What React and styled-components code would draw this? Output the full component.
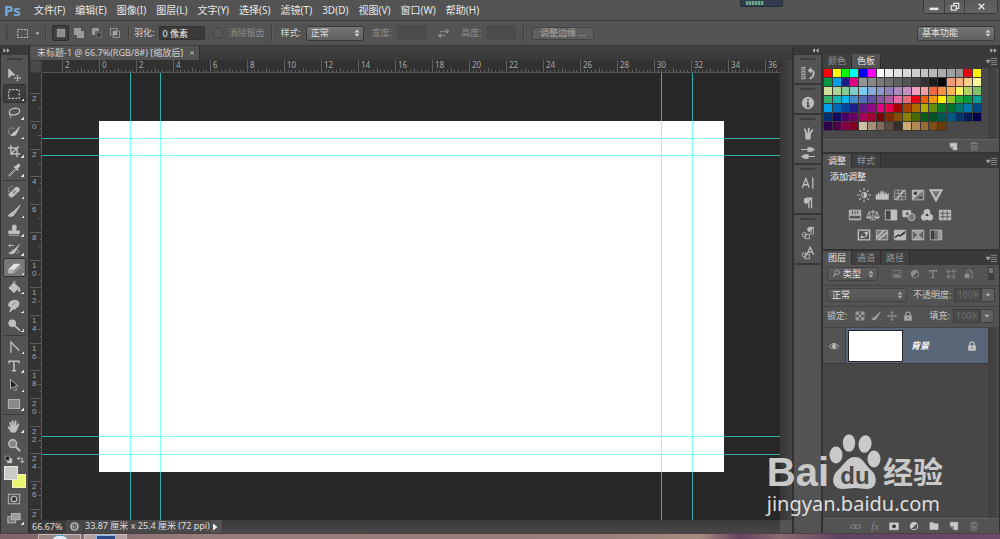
import { useState } from "react";
import styled, { createGlobalStyle } from "styled-components";

const MENUS = ["文件(F)", "编辑(E)", "图像(I)", "图层(L)", "文字(Y)", "选择(S)", "滤镜(T)", "3D(D)", "视图(V)", "窗口(W)", "帮助(H)"];

const SWATCHES = (
    "ff0000 ffff00 00ff00 00ffff 0000ff ff00ff ffffff ebebeb e1e1e1 d7d7d7 cccccc c2c2c2 b7b7b7 acacac a0a0a0 959595 e60012 fff100 " +
    "009944 00a0e9 1d2088 e4007f 959595 888888 7b7b7b 6e6e6e 616161 545454 444444 333333 1c1c1c 000000 f29b76 f6b37f facd89 fff799 " +
    "cce198 acd598 89c997 84ccc9 7ecef4 88abda 8c97cb 8f82bc aa89bd c490bf f19ec2 f29c9f ec6941 f19149 f8b551 fff45c b3d465 80c269 " +
    "32b16c 13b5b1 00b7ee 448aca 556fb5 5f52a0 8957a1 ae5da1 ea68a2 eb6877 e60012 eb6100 f39800 fff100 8fc31f 22ac38 009944 009e96 " +
    "00a0e9 0068b7 00479d 1d2088 601986 920783 e4007f e5004f a40000 a84200 ac6a00 b7aa00 638c0b 097c25 007130 00736d 0075a9 004986 " +
    "002e73 100964 4a0063 6a005f a4005b a40035 7d0000 7f2d00 834e00 8a8000 486a00 005e15 005520 005752 005982 003567 001c58 03004c " +
    "31004a 500047 7e0043 7d0022 cfbfa2 a59079 806b5b 5c4a40 362e2b cfa972 b28850 996c33 7a5018 6a3906"
).split(" ");

const GUIDES_X = [88, 118, 619, 650];
const GUIDES_Y = [65, 82, 363, 381];

// drawings on a 16 x 16 grid
const ICONS = {
    move: <><path d="M2 1v10l3-3h4z" fill="currentColor" /><path d="M12 8v7M8.500 11.500h7M11 9l1-1 1 1M11 14l1 1 1-1M9.500 10.500l-1 1 1 1M14.500 10.500l1 1-1 1" /></>,
    marquee: <rect x="2" y="3" width="12" height="10" strokeDasharray="2.500 1.500" strokeWidth="1.300" />,
    lasso: <><ellipse cx="8.500" cy="6.500" rx="6" ry="3.700" strokeWidth="1.500" transform="rotate(-10 8 6)" /><path d="M4 9c-2 1-1 3 .5 2.500S5 9 3 9.500M4 12v2" /></>,
    quick: <><path d="M8 4c-4-2-7 1-6 5 .6 2 3 4 6 3" strokeDasharray="1.500 1.200" /><path d="M14.500 2L9 8l2 1.500z" fill="currentColor" /><path d="M9.500 8c-3 0-3 3-5 3.500 3 1.500 6.500.5 6-2.500z" fill="currentColor" /></>,
    crop: <path d="M4.500 1v10.500H15M1 4.500h10.500V15M4.500 11.500L13.500 2.500" strokeWidth="1.600" />,
    dropper: <><path d="M9 7l-6 6-1 2 2-1 6-6" /><path d="M8 4.500l4 4 1-1-1-1 2.500-3c.8-1.500-1-2.800-2-2L9.500 4l-.8-.5z" fill="currentColor" /></>,
    heal: <><rect x="1" y="5.500" width="14" height="5.500" rx="2.700" fill="currentColor" transform="rotate(-42 8 8)" /><path d="M6 7l3 3M7.500 5.500l3 3" stroke="#535353" /><path d="M7 2C3 1 .5 4 2 8" strokeDasharray="1.500 1.200" /></>,
    brush: <><path d="M15 1.500L7 9l2 2z" fill="currentColor" /><path d="M7 9.500c-3-.5-3 2.800-6 4 3 1.200 7.500.5 7.500-2.500z" fill="currentColor" /></>,
    stamp: <path d="M6.500 9L6 5a2.300 2.300 0 1 1 4.500 0L10 9h4v3H2V9zM2 14h12" fill="currentColor" />,
    history: <><path d="M14 3L8 9l1.500 1.500z" fill="currentColor" /><path d="M8 9c-3 0-3 3-6 4 3 1 7.500.5 7.500-2.500z" fill="currentColor" /><path d="M2 4h6M2 4l2-2M2 4l2 2M11 9c3 0 3 4 0 4" /></>,
    eraser: <><path d="M1 10L8 3h7.500L8.500 10z" fill="#e2e2e2" stroke="none" /><path d="M1 10.500h7.500V14H1z" fill="#b4b4b4" stroke="none" /><path d="M9 10.200L15.500 3.700V7L9 13.500z" fill="#9a9a9a" stroke="none" /></>,
    bucket: <><path d="M2 9l6-5.500 5.500 5L8 14.500z" fill="currentColor" /><path d="M7 8V3.500c0-3 3-2.500 3 0" /><path d="M13 8c2 2 2.500 4 1 5.500-1.500-1-1.500-3-1-5.500z" fill="currentColor" /></>,
    smudge: <><path d="M3 14.500l2-4.500-3-2c-1-4 3-6.500 7-6.500 5 0 5.500 4 4 6.500l-3 3-2 1-1-1-3 3.500z" fill="currentColor" /><path d="M6 7l4-3" stroke="#888" /></>,
    dodge: <><circle cx="6" cy="6" r="4" fill="currentColor" /><path d="M9 9l6 5.500" strokeWidth="2" /></>,
    pen: <path d="M4.500 14.500V2.500l9.500 9.500" strokeWidth="1.500" />,
    type: <path d="M2.500 5V2.500h11V5M8 2.500v11M5.500 13.500h5" strokeWidth="1.800" />,
    select: <path d="M4 1.500v11l3-2.500 2 4.500 2-1-2-4.200h3.500z" fill="#222" />,
    shape: <rect x="1.500" y="3" width="13" height="10" fill="#8a8a8a" />,
    hand: <path d="M4.500 15c-1-3-3-4-3.500-6l1-.5 2.500 2L3 4l1.300-.5L6 8 5.700 2l1.400-.2L8 8l1.300-6 1.300.3L10 8.500 12.800 5l1 .8-2 5.200-1.800 4z" fill="currentColor" strokeWidth=".6" />,
    zoom: <><circle cx="6.500" cy="6.500" r="4.500" fill="#858585" strokeWidth="1.600" /><path d="M10 10l5 5" strokeWidth="2.400" /></>,
    mask: <><rect x="1.500" y="2.500" width="13" height="11" /><circle cx="8" cy="8" r="3.200" fill="#3a3a3a" strokeWidth="1.300" /></>,
    screen: <><rect x="1" y="6.500" width="9" height="7" fill="#777" /><rect x="5" y="3" width="10" height="7" fill="#999" /></>,
    square: <rect x="3" y="3" width="10" height="10" fill="#8c8c8c" />,
    unite: <><rect x="2" y="2" width="8" height="8" fill="#999" /><rect x="6" y="6" width="8" height="8" fill="#999" /></>,
    subtract: <><path d="M2 10V2h8v3H5v5z" fill="#999" /><rect x="7" y="7" width="7" height="7" fill="#444" stroke="#777" /></>,
    intersect: <><rect x="2" y="2" width="8.500" height="8.500" /><rect x="5.500" y="5.500" width="8.500" height="8.500" /><path d="M6 6h4v4H6z" fill="currentColor" /></>,
    swap: <path d="M3 5h9M1 11h10M12 2v6l4-3zM4 8v6l-4-3z" fill="currentColor" strokeWidth="1.300" />,
    grip: <path d="M8 0v16" strokeWidth="3" strokeDasharray="1 1.500" stroke="#3a3a3a" />,
    down: <path d="M3 5.500h10L8 11z" fill="currentColor" stroke="none" />,
    updown: <path d="M3 7l5-6 5 6zM3 9.500l5 6 5-6z" fill="currentColor" stroke="none" />,
    minus: <path d="M1 9h14v4H1z" fill="currentColor" stroke="none" />,
    restore: <><path d="M6 6V2h8v8h-4" strokeWidth="2" /><rect x="2" y="6" width="8" height="7" strokeWidth="2" /></>,
    close: <path d="M3 3l10 10M13 3L3 13" strokeWidth="2.500" />,
    closeThin: <path d="M3 3l10 10M13 3L3 13" strokeWidth="2" />,
    left2: <path d="M7 3v10L1 8zM15 3v10L9 8z" fill="currentColor" stroke="none" />,
    right2: <path d="M1 3v10l6-5zM9 3v10l6-5z" fill="currentColor" stroke="none" />,
    panelMenu: <path d="M0 6h6L3 10zM7 3.500h9M7 6.500h9M7 9.500h9M7 12.500h9" fill="currentColor" />,
    historyPanel: <><rect x="1" y="1.500" width="3.500" height="3" /><rect x="1" y="6.500" width="3.500" height="3" /><rect x="1" y="11.500" width="3.500" height="3" /><path d="M11 5c5 0 5 6-1 9.500" strokeWidth="2" /><path d="M12 1.500v7L7.500 5z" fill="currentColor" stroke="none" /></>,
    info: <><circle cx="8" cy="8" r="6.500" fill="currentColor" /><path d="M8 3.500v2M6.500 7.500H8V12M6.500 12h3.500" stroke="#444" strokeWidth="1.700" /></>,
    brushes: <><path d="M5 9h6l-.8 6H5.800z" fill="currentColor" /><path d="M6.500 9L4 3M8.500 9L9 2M10 9l3.500-5" strokeWidth="2" /></>,
    presets: <path d="M0 4h8M8 2h4l3 2-3 2H8zM16 12H8M8 10H4l-3 2 3 2h4z" fill="currentColor" strokeWidth="1.300" />,
    para: <path d="M7 8.500a3 3 0 0 1 0-6h6M9 2.500V14M12 2.500V14M7 3v5" strokeWidth="1.500" fill="currentColor" />,
    charPanel: <path d="M1.500 13.500L5.500 3l4 10.500M3 10h5M13.500 1.500v13" strokeWidth="1.500" />,
    paraStyle: <><path d="M10 6.500a2.300 2.300 0 0 1 0-5h4.500M11.500 1.500V10M14 1.500V10" fill="currentColor" /><circle cx="3.800" cy="10" r="2.500" /><rect x="4.500" y="9.500" width="5" height="5" /></>,
    charStyle: <><path d="M7 9l3.500-7.500L14.500 10M8.500 7h5" strokeWidth="1.500" /><circle cx="3.800" cy="10" r="2.500" /><rect x="4.500" y="9.500" width="5" height="5" /></>,
    sun: <><circle cx="8" cy="8" r="3" /><path d="M8 5a3 3 0 0 1 0 6z" fill="currentColor" /><path d="M8 0v3M8 13v3M0 8h3M13 8h3M2.500 2.500l2 2M11.500 11.500l2 2M13.500 2.500l-2 2M4.500 11.500l-2 2" strokeWidth="1.300" /></>,
    levels: <path d="M1 13V9l1-2 1 2 1-4 1.500 3L7 3l1 4 1.500-4L11 8l1.500-3L14 8l1.500-2v7z" fill="currentColor" strokeWidth=".5" />,
    curves: <><path d="M1.500 2.500h13v11h-13zM6 2.500v11M10 2.500v11M1.500 6h13M1.500 10h13" strokeWidth=".7" /><path d="M2 13c7-1 5-9 12-10" strokeWidth="1.500" /></>,
    exposure: <><path d="M1.500 2.500v11h13v-11z" fill="#b4b4b4" /><path d="M2 13L14 3v10z" fill="#777" stroke="none" /><path d="M3 6h4M5 4v4M9 11h4" stroke="#2c2c2c" strokeWidth="1.500" /></>,
    vibrance: <path d="M1.500 2.500h13L8 14z" fill="#777" strokeWidth="2.200" />,
    hue: <><path d="M1.500 2.500h13v11h-13z" fill="#b0b0b0" /><path d="M2 10.500h12" stroke="#555" strokeWidth="3" /><path d="M5 3v4M8 3v4M11 3v4" stroke="#444" /></>,
    balance: <><path d="M8 2v11M3 4.500h10M5 13.500h6M3.500 5L1 10.500h5zM12.500 5L10 10.500h5z" /><path d="M1 11h5M10 11h5" strokeWidth="2" /></>,
    bw: <><path d="M1.500 2.500h13v11h-13z" fill="#444" /><path d="M8 2.500h6.500v11H8z" fill="currentColor" /></>,
    filter: <><path d="M1 3h9v7H1z" fill="currentColor" /><circle cx="6" cy="6.500" r="2" fill="#444" /><circle cx="11" cy="10.500" r="4" fill="#777" /></>,
    mixer: <><circle cx="8" cy="5" r="3.500" fill="currentColor" /><circle cx="5" cy="10.500" r="3.500" fill="currentColor" /><circle cx="11" cy="10.500" r="3.500" fill="currentColor" /><path d="M8 6l2 3H6z" fill="#333" stroke="none" /></>,
    lut: <><path d="M1.500 2.500h13v11h-13z" fill="#bbb" /><path d="M5.500 3v10M10.500 3v10M2 6h12M2 10h12" stroke="#555" /></>,
    invert: <><path d="M1.500 2.500h13v11h-13z" fill="#555" strokeWidth="1.500" /><path d="M3 12c2-1 2-8 10-8-1 3-1 6-5 7z" fill="currentColor" stroke="none" /><circle cx="8" cy="8" r="2" fill="#444" stroke="none" /></>,
    posterize: <><path d="M1.500 2.500h13v11h-13z" fill="#777" /><path d="M2 11l8-8M4 13L14 5" strokeWidth="2" /></>,
    threshold: <><path d="M1.500 2.500h13v11h-13z" fill="#bbb" /><path d="M2 10l4-3 2 1 6-5v3l-6 4-2-1-4 3z" fill="#333" stroke="none" /></>,
    selective: <><path d="M1.500 2.500h13v11h-13z" fill="#a4a4a4" /><path d="M1.500 2.500L8 8l-6.500 5.500zM14.500 2.500L8 8l6.500 5.500z" fill="#666" strokeWidth=".6" /></>,
    gradient: <><path d="M1.500 2.500h13v11h-13z" fill="#999" /><path d="M2 3h4v10H2z" fill="#3c3c3c" stroke="none" /><path d="M6 3h4v10H6z" fill="#6c6c6c" stroke="none" /></>,
    search: <><circle cx="9" cy="6" r="4" strokeWidth="1.500" /><path d="M6 9l-4 5" strokeWidth="1.800" /></>,
    picture: <><path d="M1.500 2.500h13v11h-13z" /><path d="M3 12l3-5 3 3 2-2 2.500 4z" fill="currentColor" stroke="none" /><circle cx="11.500" cy="5.500" r="1" fill="currentColor" stroke="none" /></>,
    adjust: <><circle cx="8" cy="8" r="6" strokeWidth="1.500" /><path d="M12 4A5.600 5.600 0 0 0 4 12z" fill="currentColor" /></>,
    path: <path d="M4 4h8v8H4zM1.500 1.500H5V5H1.500zM11 1.500h3.500V5H11zM1.500 11H5v3.500H1.500zM11 11h3.500v3.500H11z" />,
    smart: <><path d="M5 8V1.500h5l3.500 3.500v9H8" /><path d="M1.500 8H8v6H1.500z" fill="currentColor" /><path d="M10 1.500V5h3.500" /></>,
    checker: <><path d="M1.500 1.500h13v13h-13z" /><path d="M2 2h4v4H2zM10 2h4v4h-4zM6 6h4v4H6zM2 10h4v4H2zM10 10h4v4h-4z" fill="currentColor" stroke="none" /></>,
    moveAll: <path d="M8 1v14M1 8h14M6 3l2-2 2 2M6 13l2 2 2-2M3 6L1 8l2 2M13 6l2 2-2 2" strokeWidth="1.300" />,
    lock: <><path d="M2.500 7.500h11V15h-11z" fill="currentColor" /><path d="M4.500 7V5a3.500 3.500 0 0 1 7 0v2" strokeWidth="1.800" fill="none" /><path d="M8 9.500v3" stroke="#555" strokeWidth="2" /></>,
    eye: <><path d="M.5 8.500C4 2.500 12 2.500 15.500 8.500 12 13.500 4 13.500.5 8.500z" strokeWidth="1.500" /><circle cx="8" cy="8" r="3" fill="currentColor" /></>,
    link: <><rect x="1" y="5.500" width="7.500" height="5" rx="2.500" strokeWidth="1.500" /><rect x="7.500" y="5.500" width="7.500" height="5" rx="2.500" strokeWidth="1.500" /></>,
    addMask: <><path d="M1 3h14v11H1z" fill="currentColor" /><circle cx="8" cy="8.500" r="3" fill="#333" stroke="none" /></>,
    folder: <path d="M1.500 2.500h5l1.500 2h6.500v9h-13z" fill="currentColor" />,
    page: <><path d="M2 2h12v12H8V8H2z" fill="currentColor" /><path d="M2 9l5 5V9z" fill="#999" stroke="none" /></>,
    trash: <path d="M2 4h12M6 4V2h4v2M3.500 5v9.500h9V5M6 6.500v6M8 6.500v6M10 6.500v6" strokeWidth="1.300" />,
    reset: <><rect x="6" y="6" width="8" height="8" fill="#ccc" /><rect x="2" y="2" width="8" height="8" fill="#222" /></>,
    swapSmall: <path d="M3 6h8v7M5.500 3L2.500 6l3 3M8 10.500l3 3.500 3-3.500" strokeWidth="1.700" />,
    status: <><circle cx="8" cy="8" r="7" fill="#aaa" /><path d="M5 4h6v8H5zM8 5v4h4" stroke="#444" strokeWidth="1.400" /></>,
    play: <path d="M4 1v14l9-7z" fill="currentColor" stroke="none" />,
};

function Icon({ name, size = 13 }) {
    return (
        <Glyph width={size} height={size} viewBox="0 0 16 16" fill="none" stroke="currentColor" aria-hidden="true">
            {ICONS[name]}
        </Glyph>
    );
}

const TOOLS = [
    ["move", "marquee", "lasso", "quick", "crop", "dropper"],
    ["heal", "brush", "stamp", "history", "eraser", "bucket", "smudge", "dodge"],
    ["pen", "type", "select", "shape"],
    ["hand", "zoom"],
];

const DOCK = [["historyPanel"], ["info"], ["brushes", "presets"], ["charPanel", "para"], ["paraStyle", "charStyle"]];

const ADJUSTMENTS = [
    ["sun", "levels", "curves", "exposure", "vibrance"],
    ["hue", "balance", "bw", "filter", "mixer", "lut"],
    ["invert", "posterize", "threshold", "selective", "gradient"],
];

// one labelled division is 2 cm, split in ten
function RulerTop() {
    const marks = [];
    for (let i = -1; i <= 18; i++) {
        const x = Math.round(57 + i * 37);
        marks.push(<path key={i} d={`M${x + 0.5} 0V13`} />);
        for (let k = 1; k < 10; k++) {
            marks.push(<path key={i + "-" + k} d={`M${Math.round(x + k * 3.7) + 0.5} ${k === 5 ? 8 : 10}V13`} />);
        }
        marks.push(<text key={"t" + i} x={x + 3} y="8">{Math.abs(i * 2)}</text>);
    }
    return <TopRuler>{marks}</TopRuler>;
}

function RulerLeft() {
    const marks = [];
    for (let i = -1; i <= 14; i++) {
        const y = Math.round(48 + i * 27.7);
        marks.push(<path key={i} d={`M0 ${y + 0.5}H12`} />);
        for (let k = 1; k < 4; k++) {
            marks.push(<path key={i + "-" + k} d={`M${k === 2 ? 8 : 10} ${Math.round(y + k * 6.9) + 0.5}H12`} />);
        }
        String(Math.abs(i * 2)).split("").forEach((digit, n) => {
            marks.push(<text key={"t" + i + n} x="2" y={y + 8 + n * 8}>{digit}</text>);
        });
    }
    return <SideRuler>{marks}</SideRuler>;
}

function Select({ label, width, children, icon, small }) {
    return (
        <SelectBox $width={width} $small={small}>
            {icon && <Icon name={icon} size={9} />}
            <NativeSelect aria-label={label}>{children}</NativeSelect>
            <Icon name="updown" size={8} />
        </SelectBox>
    );
}

function PanelTabs({ tabs, active }) {
    return (
        <TabStrip>
            {tabs.map((tab) => <PanelTab key={tab} $active={tab === active}>{tab}</PanelTab>)}
            <Spacer />
            <PlainButton aria-label="面板菜单"><Icon name="panelMenu" size={11} /></PlainButton>
        </TabStrip>
    );
}

function Percent({ id, label }) {
    return (
        <>
            <label htmlFor={id}>{label}</label>
            <PercentBox>
                <PercentInput id={id} defaultValue="100%" disabled />
                <PercentButton aria-label={label + "选项"}><Icon name="down" size={8} /></PercentButton>
            </PercentBox>
        </>
    );
}

export default function App() {
    const [tool, setTool] = useState("eraser");
    return (
        <>
            <GlobalStyle />
            <Window>
                <MenuBar>
                    <Logo>Ps</Logo>
                    {MENUS.map((menu) => <MenuItem key={menu}>{menu}</MenuItem>)}
                    <Spacer />
                    <Meter><MeterFill /></Meter>
                    <WindowButtons>
                        <WindowButton aria-label="最小化"><Icon name="minus" size={10} /></WindowButton>
                        <WindowButton aria-label="还原"><Icon name="restore" size={10} /></WindowButton>
                        <WindowButton aria-label="关闭" $wide><Icon name="close" size={9} /></WindowButton>
                    </WindowButtons>
                </MenuBar>

                <OptionsBar>
                    <Icon name="grip" size={14} />
                    <PresetButton aria-label="矩形选框"><Icon name="marquee" size={13} /><Icon name="down" size={7} /></PresetButton>
                    <Divider />
                    <ModeGroup>
                        <ModeButton aria-label="新选区" $active><Icon name="square" size={12} /></ModeButton>
                        <ModeButton aria-label="添加到选区"><Icon name="unite" size={12} /></ModeButton>
                        <ModeButton aria-label="从选区减去"><Icon name="subtract" size={12} /></ModeButton>
                        <ModeButton aria-label="与选区交叉"><Icon name="intersect" size={12} /></ModeButton>
                    </ModeGroup>
                    <Divider />
                    <Field>羽化:<TextInput $width={46} defaultValue="0 像素" /></Field>
                    <Field $dim><CheckBox type="checkbox" disabled />消除锯齿</Field>
                    <Divider $wide />
                    <Field as="div">样式:<Select label="样式" width={58}><option>正常</option></Select></Field>
                    <Field $dim>宽度:<TextInput $width={29} disabled /></Field>
                    <SwapButton aria-label="高度和宽度互换"><Icon name="swap" size={11} /></SwapButton>
                    <Field $dim>高度:<TextInput $width={29} disabled /></Field>
                    <Divider $wide />
                    <RefineButton disabled>调整边缘 ...</RefineButton>
                    <Spacer />
                    <Select label="工作区" width={78}><option>基本功能</option></Select>
                </OptionsBar>

                <Workspace>
                    <ToolColumn>
                        <ToolHead><Icon name="right2" size={7} /></ToolHead>
                        <ToolList>
                            <Grip />
                            {TOOLS.map((group, i) => (
                                <ToolGroup key={i}>
                                    {group.map((name) => (
                                        <ToolButton
                                            key={name}
                                            aria-label={name}
                                            onClick={() => setTool(name)}
                                            $pressed={name === "marquee"}
                                            $lit={name === tool}
                                            $more={name !== "move" && name !== "zoom"}
                                        >
                                            <Icon name={name} size={14} />
                                        </ToolButton>
                                    ))}
                                </ToolGroup>
                            ))}
                            <ColorTools>
                                <Icon name="reset" size={9} />
                                <Icon name="swapSmall" size={9} />
                            </ColorTools>
                            <ColorPair><BackColor /><FrontColor /></ColorPair>
                            <ToolButton aria-label="快速蒙版"><Icon name="mask" size={14} /></ToolButton>
                            <ToolButton aria-label="屏幕模式" $more><Icon name="screen" size={14} /></ToolButton>
                        </ToolList>
                    </ToolColumn>

                    <Document>
                        <DocTabs>
                            <DocTab>
                                未标题-1 @ 66.7%(RGB/8#) [缩放后]
                                <PlainButton aria-label="关闭文档"><Icon name="closeThin" size={6} /></PlainButton>
                            </DocTab>
                        </DocTabs>
                        <DocBody>
                            <Corner />
                            <RulerTop />
                            <ScrollTrack />
                            <RulerLeft />
                            <Canvas>
                                <Sheet />
                                {GUIDES_X.map((x) => <GuideX key={x} $at={x} />)}
                                {GUIDES_Y.map((y) => <GuideY key={y} $at={y} />)}
                            </Canvas>
                            <ScrollTrack />
                        </DocBody>
                        <StatusBar>
                            <StatusZoom>66.67%</StatusZoom>
                            <StatusIcon><Icon name="status" size={9} /></StatusIcon>
                            <StatusText>33.87 厘米 x 25.4 厘米 (72 ppi)</StatusText>
                            <StatusButton aria-label="状态菜单"><Icon name="play" size={8} /></StatusButton>
                            <ScrollLine />
                            <ScrollCorner />
                        </StatusBar>
                    </Document>

                    <Side>
                        <SideHead>
                            <Icon name="left2" size={7} />
                            <Icon name="right2" size={7} />
                        </SideHead>
                        <SideBody>
                            <Dock>
                                {DOCK.map((group, i) => (
                                    <DockGroup key={i}>
                                        <Grip $tight />
                                        {group.map((name) => <DockButton key={name} aria-label={name}><Icon name={name} size={14} /></DockButton>)}
                                    </DockGroup>
                                ))}
                            </Dock>
                            <Panels>
                                <PanelTabs tabs={["颜色", "色板"]} active="色板" />
                                <SwatchBody>
                                    <SwatchGrid>
                                        {SWATCHES.map((color, i) => <Swatch key={i} $color={"#" + color} />)}
                                    </SwatchGrid>
                                    <PanelScroll />
                                </SwatchBody>
                                <SwatchFooter>
                                    <Icon name="page" size={9} />
                                    <Faint><Icon name="trash" size={10} /></Faint>
                                </SwatchFooter>

                                <PanelTabs tabs={["调整", "样式"]} active="调整" />
                                <AdjustBody>
                                    <AdjustTitle>添加调整</AdjustTitle>
                                    {ADJUSTMENTS.map((row, i) => (
                                        <AdjustRow key={i}>
                                            {row.map((name) => <PlainButton key={name} aria-label={name}><Icon name={name} size={14} /></PlainButton>)}
                                        </AdjustRow>
                                    ))}
                                </AdjustBody>

                                <PanelTabs tabs={["图层", "通道", "路径"]} active="图层" />
                                <LayerRow>
                                    <Select label="类型" width={51} icon="search" small><option>类型</option></Select>
                                    <FilterIcons>
                                        {["picture", "adjust", "type", "path", "smart"].map((name) => <Icon key={name} name={name} size={10} />)}
                                    </FilterIcons>
                                    <Toggle />
                                </LayerRow>
                                <LayerRow>
                                    <Select label="混合模式" width={80} small><option>正常</option></Select>
                                    <Spacer />
                                    <Percent id="opacity" label="不透明度:" />
                                </LayerRow>
                                <LayerRow>
                                    锁定:
                                    <LockIcons>
                                        {["checker", "brush", "moveAll", "lock"].map((name) => <Icon key={name} name={name} size={10} />)}
                                    </LockIcons>
                                    <Spacer />
                                    <Percent id="fill" label="填充:" />
                                </LayerRow>
                                <LayerList>
                                    <Layer>
                                        <EyeCell><Icon name="eye" size={10} /></EyeCell>
                                        <LayerMain>
                                            <Thumb />
                                            <LayerName>背景</LayerName>
                                            <Spacer />
                                            <Icon name="lock" size={10} />
                                        </LayerMain>
                                    </Layer>
                                    <PanelScroll />
                                </LayerList>
                                <LayerFooter>
                                    <Faint><Icon name="link" size={11} /></Faint>
                                    <Faint><Fx>fx</Fx></Faint>
                                    {["addMask", "adjust", "folder", "page"].map((name) => <Icon key={name} name={name} size={10} />)}
                                    <Faint><Icon name="trash" size={10} /></Faint>
                                </LayerFooter>
                            </Panels>
                        </SideBody>
                    </Side>
                </Workspace>

                <Taskbar>
                    <TaskButton><TaskCircle /></TaskButton>
                    <TaskButton $active><TaskApp /></TaskButton>
                </Taskbar>

                <Watermark>
                    <WatermarkTop>
                        <WatermarkLatin>Bai</WatermarkLatin>
                        <Paw width="52" height="56" viewBox="0 0 52 56" fill="currentColor">
                            <ellipse cx="7" cy="21" rx="6.500" ry="8.500" />
                            <ellipse cx="20" cy="9" rx="6.200" ry="8.800" />
                            <ellipse cx="36" cy="10" rx="6.500" ry="8.800" transform="rotate(8 36 10)" />
                            <ellipse cx="45" cy="25" rx="6.500" ry="8.500" />
                            <path d="M26 23c8 0 10 8 16 13 7 6 7 19-4 19-5 0-7-1-12-1s-8 1-12 1C2 55 2 42 9 36c6-5 9-13 17-13z" />
                            <text x="26" y="50" textAnchor="middle">du</text>
                        </Paw>
                        <WatermarkCjk>经验</WatermarkCjk>
                    </WatermarkTop>
                    <WatermarkUrl>jingyan.baidu.com</WatermarkUrl>
                </Watermark>
            </Window>
        </>
    );
}

const GlobalStyle = createGlobalStyle`
    * {
        box-sizing: border-box;
    }

    body {
        margin: 0;
        background: #282828;
        overflow: hidden;
    }

    body, button, input, select {
        font-family: "Noto Sans", "Noto Sans CJK SC", sans-serif;
        font-size: 9px;
        line-height: 12px;
        color: #d6d6d6;
    }

    button {
        padding: 0;
        border: 0;
        background: none;
    }
`;

const Glyph = styled.svg`
    display: block;
    flex: none;
`;

const Window = styled.div`
    position: relative;
    height: 100vh;
    display: flex;
    flex-direction: column;
    overflow: hidden;
`;

const Spacer = styled.div`
    flex: 1;
`;

const PlainButton = styled.button`
    color: inherit;
`;

const Faint = styled.span`
    color: #858585;
`;

// 菜单栏
const MenuBar = styled.nav`
    height: 21px;
    flex: none;
    display: flex;
    align-items: center;
    padding-right: 2px;
    background: #535353;
    border-bottom: 1px solid #3c3c3c;
`;

const Logo = styled.div`
    width: 29px;
    padding-left: 4px;
    font-size: 15px;
    line-height: 18px;
    font-weight: 700;
    color: #7aa7d8;
`;

const MenuItem = styled.button`
    padding: 0 5px;
    font-size: 10px;
    color: #e8e8e8;
    white-space: nowrap;
`;

const Meter = styled.div`
    align-self: flex-start;
    width: 43px;
    height: 7px;
    margin-right: 140px;
    padding: 1px 5px;
    background: #333b50;
    border: 1px solid #262b38;
    border-top: 0;
    border-radius: 0 0 3px 3px;
`;

const MeterFill = styled.div`
    width: 18px;
    height: 4px;
    background: repeating-linear-gradient(90deg, #66aa8a 0 2px, #46655c 2px 3px);
`;

const WindowButtons = styled.div`
    display: flex;
    align-self: flex-start;
    border: 1px solid #383838;
    border-top: 0;
    border-radius: 0 0 3px 3px;
`;

const WindowButton = styled.button`
    width: ${(props) => (props.$wide ? "33px" : "20px")};
    height: 13px;
    display: flex;
    align-items: center;
    justify-content: center;
    background: linear-gradient(#5a5a5a, #636363);
    color: #e4e4e4;

    & + & {
        border-left: 1px solid #3d3d3d;
    }
`;

// 选项栏
const OptionsBar = styled.div`
    height: 25px;
    flex: none;
    display: flex;
    align-items: center;
    gap: 8px;
    padding: 0 5px 0 0;
    background: #535353;
    border-bottom: 1px solid #3a3a3a;
    white-space: nowrap;

    & > svg:first-child {
        margin-right: -8px;
    }
`;

const PresetButton = styled.button`
    width: 25px;
    margin-left: 2px;
    display: flex;
    align-items: center;
    justify-content: space-between;
    color: #c4c4c4;
`;

const Divider = styled.div`
    width: 2px;
    height: 17px;
    margin: 0 ${(props) => (props.$wide ? "-1px" : "-4px")};
    background: #404040;
    border-right: 1px solid #5c5c5c;
`;

const ModeGroup = styled.div`
    display: flex;
    gap: 1px;
    padding: 0 1px;
`;

const ModeButton = styled.button`
    width: 17px;
    height: 16px;
    display: flex;
    align-items: center;
    justify-content: center;
    border: 1px solid ${(props) => (props.$active ? "#2e2e2e" : "transparent")};
    border-radius: 2px;
    background: ${(props) => (props.$active ? "#3f3f3f" : "none")};
    color: #a8a8a8;
`;

const Field = styled.label`
    display: flex;
    align-items: center;
    gap: 5px;
    color: ${(props) => (props.$dim ? "#8e8e8e" : "#d6d6d6")};
`;

const TextInput = styled.input`
    width: ${(props) => props.$width}px;
    height: 14px;
    padding: 0 2px;
    border: 1px solid ${(props) => (props.disabled ? "#484848" : "#333")};
    background: ${(props) => (props.disabled ? "#4b4b4b" : "#3a3a3a")};
    color: #eee;
`;

const CheckBox = styled.input`
    appearance: none;
    width: 10px;
    height: 10px;
    margin: 0;
    border: 1px solid #444;
    border-radius: 2px;
    background: #585858;
`;

const SelectBox = styled.div`
    width: ${(props) => props.$width}px;
    height: ${(props) => (props.$small ? 14 : 15)}px;
    flex: none;
    display: flex;
    align-items: center;
    gap: 2px;
    padding: 0 2px 0 4px;
    border: 1px solid ${(props) => (props.$small ? "#424242" : "#393939")};
    border-radius: 2px;
    background: ${(props) => (props.$small ? "linear-gradient(#5e5e5e, #545454)" : "linear-gradient(#747474, #5f5f5f)")};
    color: ${(props) => (props.$small ? "#a8a8a8" : "#d0d0d0")};
`;

const NativeSelect = styled.select`
    appearance: none;
    flex: 1;
    min-width: 0;
    padding: 0;
    border: 0;
    background: none;
    color: #e0e0e0;
`;

const SwapButton = styled.button`
    width: 19px;
    display: flex;
    justify-content: center;
    color: #8e8e8e;
`;

const RefineButton = styled.button`
    width: 62px;
    height: 13px;
    border: 1px solid #434343;
    border-radius: 2px;
    background: #5e5e5e;
    color: #a6a6a6;
    line-height: 10px;
`;

const Workspace = styled.div`
    flex: 1;
    min-height: 0;
    display: flex;
    background: #333;
`;

// 工具栏
const ToolColumn = styled.aside`
    width: 30px;
    flex: none;
    display: flex;
    flex-direction: column;
    border-left: 1px solid #2f2f2f;
    border-right: 2px solid #303030;
`;

const ToolHead = styled.div`
    height: 9px;
    padding: 1px 2px;
    background: #393939;
    color: #b8b8b8;
`;

const ToolList = styled.div`
    flex: 1;
    display: flex;
    flex-direction: column;
    align-items: center;
    background: #535353;
`;

const Grip = styled.div`
    width: 15px;
    height: 2px;
    margin: 3px auto ${(props) => (props.$tight ? 3 : 5)}px;
    background: repeating-linear-gradient(90deg, #343434 0 1px, #484848 1px 2px);
`;

const ToolGroup = styled.div`
    & + & {
        margin-top: 1px;
        padding-top: 1px;
        border-top: 1px solid #3b3b3b;
    }
`;

const ToolButton = styled.button`
    width: 23px;
    height: 19px;
    display: flex;
    align-items: center;
    padding-left: 3px;
    border: 1px solid ${(props) => (props.$pressed || props.$lit ? "#313131" : "transparent")};
    border-radius: 2px;
    background:
        ${(props) => (props.$more ? "linear-gradient(135deg, transparent 50%, #ddd 50%) right 1px bottom 1px / 3px 3px no-repeat," : "")}
        ${(props) => (props.$lit ? "#777" : props.$pressed ? "#3d3d3d" : "transparent")};
    color: #c0c0c0;
`;

const ColorTools = styled.div`
    width: 23px;
    height: 11px;
    display: flex;
    align-items: center;
    justify-content: space-between;
    padding: 0 1px;
    color: #c4c4c4;
`;

const ColorPair = styled.div`
    position: relative;
    width: 22px;
    height: 23px;
    margin-bottom: 1px;
`;

const FrontColor = styled.div`
    position: absolute;
    left: 0;
    top: 1px;
    width: 14px;
    height: 14px;
    background: #cccac6;
    border: 1px solid #e6e6e6;
`;

const BackColor = styled.div`
    position: absolute;
    right: 0;
    bottom: 0;
    width: 14px;
    height: 14px;
    background: #e8f56d;
    border: 1px solid #f2f2c0;
`;

// 文档窗口
const Document = styled.main`
    flex: 1;
    min-width: 0;
    display: flex;
    flex-direction: column;
`;

const DocTabs = styled.div`
    height: 14px;
    flex: none;
    display: flex;
    background: linear-gradient(#414141, #393939);
`;

const DocTab = styled.div`
    display: flex;
    align-items: center;
    gap: 6px;
    padding: 0 4px 0 7px;
    background: #535353;
    border-right: 1px solid #2d2d2d;
    white-space: nowrap;
    color: #d2d2d2;
`;

const DocBody = styled.div`
    flex: 1;
    min-height: 0;
    display: grid;
    grid-template-columns: 12px 1fr 12px;
    grid-template-rows: 13px 1fr;
`;

const Corner = styled.div`
    background: #4a4a4a;
    border: 1px solid #3a3a3a;
`;

const TopRuler = styled.svg`
    width: 100%;
    height: 13px;
    background: #323232;
    border-bottom: 1px solid #575757;
    stroke: #5e5e5e;

    text {
        font-size: 8px;
        fill: #a6a6a6;
        stroke: none;
    }
`;

const SideRuler = styled(TopRuler)`
    width: 12px;
    height: 100%;
    border-bottom: 0;
    border-right: 1px solid #575757;

    text {
        font-family: "Liberation Sans", sans-serif;
    }
`;

const ScrollTrack = styled.div`
    background: linear-gradient(90deg, #363636, #454545);
`;

const Canvas = styled.div`
    position: relative;
    overflow: hidden;
    background: #282828;
`;

const Sheet = styled.div`
    position: absolute;
    left: 57px;
    top: 48px;
    width: 625px;
    height: 351px;
    background: #fff;
`;

const GuideX = styled.div`
    position: absolute;
    top: 0;
    bottom: 0;
    left: ${(props) => props.$at}px;
    width: 1px;
    background: rgba(56, 255, 255, 0.63);
`;

const GuideY = styled.div`
    position: absolute;
    left: 0;
    right: 0;
    top: ${(props) => props.$at}px;
    height: 1px;
    background: rgba(56, 255, 255, 0.63);
`;

const StatusBar = styled.div`
    height: 13px;
    flex: none;
    display: flex;
    align-items: center;
    color: #dedede;
    white-space: nowrap;
`;

const StatusZoom = styled.div`
    width: 36px;
    padding-left: 2px;
    background: #3c3c3c;
`;

const StatusIcon = styled.div`
    width: 17px;
    height: 13px;
    display: grid;
    place-items: center;
    background: #484848;
`;

const StatusText = styled.div`
    height: 13px;
    padding: 0 1px;
    background: #484848;
    border-left: 1px solid #3a3a3a;
`;

const StatusButton = styled.button`
    width: 11px;
    height: 13px;
    background: #535353;
    color: #eee;
`;

const ScrollLine = styled.div`
    flex: 1;
    height: 13px;
    background: linear-gradient(#3a3a3a, #484848);
`;

const ScrollCorner = styled.div`
    width: 12px;
    height: 13px;
    background: #535353;
`;

// 右侧面板
const Side = styled.aside`
    width: 208px;
    flex: none;
    display: flex;
    flex-direction: column;
    border: solid #303030;
    border-width: 0 1px 0 2px;
`;

const SideHead = styled.div`
    height: 8px;
    display: flex;
    align-items: center;
    justify-content: space-between;
    padding: 0 2px 0 18px;
    background: #393939;
    color: #b8b8b8;
`;

const SideBody = styled.div`
    flex: 1;
    min-height: 0;
    display: flex;
    gap: 2px;
`;

const Dock = styled.div`
    width: 27px;
    background: #535353;
    border-top: 1px solid #333;
`;

const DockGroup = styled.div`
    border-bottom: 2px solid #383838;
`;

const DockButton = styled.button`
    width: 27px;
    height: 20px;
    display: flex;
    align-items: center;
    justify-content: center;
    color: #bcbcbc;
`;

const Panels = styled.div`
    flex: 1;
    min-width: 0;
    display: flex;
    flex-direction: column;
    background: #535353;
`;

const TabStrip = styled.div`
    height: 14px;
    flex: none;
    display: flex;
    padding-right: 2px;
    background: #3a3a3a;
    color: #a8a8a8;
`;

const PanelTab = styled.button`
    padding: 0 5px;
    border-right: 1px solid #2e2e2e;
    background: ${(props) => (props.$active ? "#535353" : "#404040")};
    color: ${(props) => (props.$active ? "#e6e6e6" : "#959595")};
`;

const SwatchBody = styled.div`
    display: flex;
    justify-content: space-between;
    height: 71px;
    background: #494949;
`;

const SwatchGrid = styled.div`
    width: 158px;
    height: 62px;
    display: grid;
    grid-template-columns: repeat(18, 1fr);
    grid-template-rows: repeat(7, 1fr);
    gap: 1px;
    padding: 1px 0 0 1px;
`;

const Swatch = styled.div`
    background: ${(props) => props.$color};
    outline: 1px solid #3a3a3a;
`;

const PanelScroll = styled.div`
    width: 11px;
    background: linear-gradient(90deg, #3e3e3e, #494949);
`;

const SwatchFooter = styled.div`
    height: 15px;
    display: flex;
    align-items: center;
    justify-content: flex-end;
    gap: 11px;
    padding-right: 20px;
    border-top: 1px solid #646464;
    border-bottom: 2px solid #333;
    color: #c6c6c6;
`;

const AdjustBody = styled.div`
    height: 83px;
    border-bottom: 2px solid #333;
`;

const AdjustTitle = styled.div`
    padding: 2px 7px;
    line-height: 13px;
    color: #eee;
`;

const AdjustRow = styled.div`
    height: 20px;
    display: flex;
    align-items: center;
    justify-content: center;
    gap: 4px;
    padding-right: 22px;
    color: #c0c0c0;
`;

const LayerRow = styled.div`
    height: 21px;
    flex: none;
    display: flex;
    align-items: center;
    gap: 3px;
    padding: 0 5px 3px 4px;
    border-bottom: 1px solid #444;
    color: #c8c8c8;
    white-space: nowrap;
`;

const FilterIcons = styled.div`
    flex: 1;
    display: flex;
    justify-content: center;
    gap: 8px;
    color: #8e8e8e;
`;

const Toggle = styled.div`
    width: 6px;
    height: 13px;
    border: 1px solid #3c3c3c;
    background: linear-gradient(#777 50%, #404040 50%);
`;

const PercentBox = styled.div`
    display: flex;
`;

const PercentInput = styled.input`
    width: 27px;
    height: 14px;
    padding: 0 2px;
    border: 1px solid #3f3f3f;
    background: #4a4a4a;
    color: #6e6e6e;
`;

const PercentButton = styled.button`
    width: 14px;
    height: 14px;
    display: grid;
    place-items: center;
    border: 1px solid #3f3f3f;
    background: #606060;
    color: #b4b4b4;
`;

const LockIcons = styled.div`
    display: flex;
    gap: 6px;
    padding-left: 5px;
    color: #a8a8a8;
`;

const LayerList = styled.div`
    flex: 1;
    min-height: 0;
    display: flex;
    background: #474747;
`;

const Layer = styled.div`
    flex: 1;
    height: 36px;
    display: flex;
    border-bottom: 1px solid #3a3a3a;
`;

const EyeCell = styled.div`
    width: 23px;
    display: grid;
    place-items: center;
    background: #535353;
    border-right: 1px solid #3e3e3e;
    color: #bcbcbc;
`;

const LayerMain = styled.div`
    flex: 1;
    display: flex;
    align-items: center;
    padding: 0 11px 0 2px;
    background: #596678;
    color: #c8c8c8;
`;

const Thumb = styled.div`
    width: 55px;
    height: 32px;
    background: #fff;
    border: 1px solid #22262c;
`;

const LayerName = styled.div`
    padding-left: 8px;
    font-style: italic;
    font-weight: 700;
    color: #fff;
`;

const LayerFooter = styled.div`
    height: 15px;
    flex: none;
    display: flex;
    align-items: center;
    justify-content: flex-end;
    gap: 10px;
    padding-right: 20px;
    border-top: 1px solid #5f5f5f;
    color: #c8c8c8;
`;

const Fx = styled.i`
    font-family: "Liberation Serif", serif;
    font-size: 11px;
`;

// 任务栏
const Taskbar = styled.footer`
    height: 6px;
    flex: none;
    display: flex;
    gap: 3px;
    padding-left: 38px;
    border-top: 1px solid #4a3f42;
    background: linear-gradient(90deg, #7d6468, #967c7a 20%, #97807c 60%, #a58c80 70%, #64435f 74%, #8b6a70 78%, #5d4460 84%, #6d4a68);
`;

const TaskButton = styled.div`
    width: 43px;
    display: flex;
    justify-content: center;
    border: 1px solid #c9bab8;
    border-bottom: 0;
    background: ${(props) => (props.$active ? "#b3a2a1" : "#988584")};
`;

const TaskCircle = styled.div`
    width: 14px;
    height: 5px;
    border-radius: 7px 7px 0 0;
    background: #e4eef4;
    border-top: 1px solid #4fa2d2;
`;

const TaskApp = styled.div`
    width: 20px;
    height: 5px;
    background: #2c4a86;
    border: 1px solid #8cb8ec;
    border-bottom: 0;
`;

// 水印
const Watermark = styled.div`
    position: absolute;
    right: 57px;
    bottom: 21px;
    color: #c9c9c9;
`;

const WatermarkTop = styled.div`
    display: flex;
    align-items: flex-end;
`;

const WatermarkLatin = styled.span`
    font-family: "Liberation Sans", sans-serif;
    font-size: 40px;
    line-height: 36px;
    font-weight: 700;
    color: #c9c9c9;
`;

const WatermarkCjk = styled.span`
    padding-left: 2px;
    font-size: 30px;
    line-height: 36px;
    font-weight: 700;
`;

const Paw = styled.svg`
    text {
        font-family: "Liberation Sans", sans-serif;
        font-size: 24px;
        font-weight: 700;
        fill: #4a4a4a;
    }
`;

const WatermarkUrl = styled.div`
    font-size: 20px;
    line-height: 28px;
    color: #dedede;
`;
